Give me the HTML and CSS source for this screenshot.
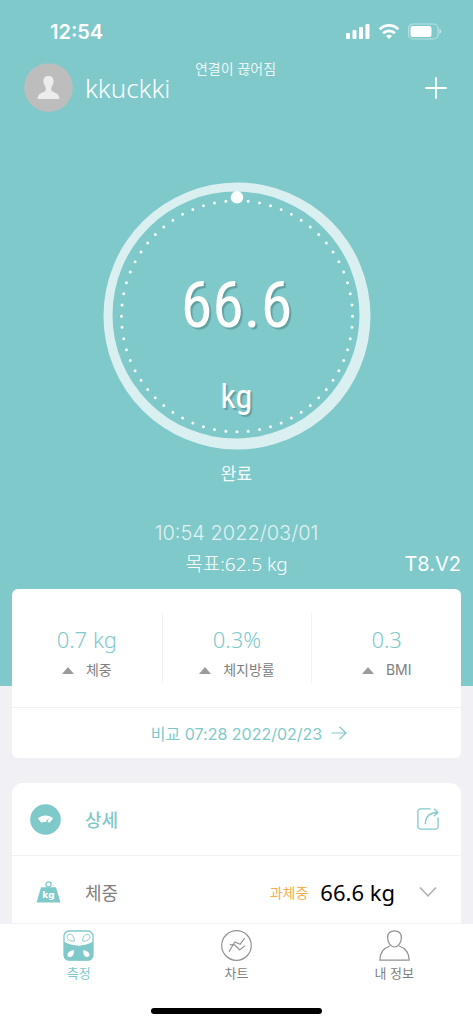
FILE: index.html
```html
<!DOCTYPE html>
<html lang="ko">
<head>
<meta charset="utf-8">
<meta name="viewport" content="width=device-width, initial-scale=1">
<title>측정</title>
<link rel="stylesheet" href="styles.css">
</head>
<body>
<div class="app">
  <main class="content">
    <section class="hero">
      <div class="status">
        <span class="clock">12:54</span>
        <svg class="status-icons" width="96" height="18" viewBox="0 0 96 18" aria-hidden="true">
          <g fill="#fff">
            <rect x="0" y="10" width="4" height="6" rx="1"/>
            <rect x="6.500" y="7" width="4" height="9" rx="1"/>
            <rect x="13" y="4" width="4" height="12" rx="1"/>
            <rect x="19.500" y="1" width="4" height="15" rx="1"/>
            <path d="M43 16 40 12.900a4.200 4.200 0 0 1 6 0z"/>
          </g>
          <g fill="none" stroke="#fff" stroke-width="2.800">
            <path d="M33.700 6.200a13.200 13.200 0 0 1 18.600 0"/>
            <path d="M37.100 10.200a8.400 8.400 0 0 1 11.800 0"/>
          </g>
          <rect x="62.600" y="1" width="29.500" height="15" rx="4.500" fill="none" stroke="#fff" stroke-opacity=".45" stroke-width="1.200"/>
          <rect x="64.500" y="3" width="21" height="11" rx="2.500" fill="#fff"/>
          <path d="M93.500 6.300c2.100.6 2.100 3.800 0 4.400z" fill="#fff" fill-opacity=".6"/>
        </svg>
      </div>
      <header class="header">
        <button class="profile" type="button">
          <svg width="49" height="49" viewBox="0 0 49 49" aria-hidden="true">
            <circle cx="24.500" cy="24.500" r="24.300" fill="#bdbdbd"/>
            <path d="M24.500 13c3.500 0 5.300 1.900 5 5.600-.2 2.700-1 4.300-2.200 5.700v2.400c0 1.300 1 1.900 3 2.700 3.200 1.300 5 2.400 5 6.600H13.700c0-4.200 1.800-5.300 5-6.600 2-.8 3-1.400 3-2.700v-2.400c-1.200-1.400-2-3-2.200-5.700-.3-3.700 1.500-5.600 5-5.600z" fill="#ececec"/>
          </svg>
          <span class="name">kkuckki</span>
        </button>
        <span class="connection">연결이 끊어짐</span>
        <button class="add" type="button" aria-label="추가">
          <svg width="22" height="22" viewBox="0 0 22 22" aria-hidden="true"><path d="M11 1v20M1 11h20" stroke="#fff" stroke-width="1.800" stroke-linecap="round"/></svg>
        </button>
      </header>
      <div class="dial">
        <svg class="ring" viewBox="0 0 268 268" aria-hidden="true">
          <path fill="#d9eff0" fill-rule="evenodd" d="M.5 134a133.500 133.500 0 1 0 267 0 133.500 133.500 0 1 0-267 0zM9.500 133a123.500 123.500 0 1 1 247 0 123.500 123.500 0 1 1-247 0z"/>
          <circle cx="134" cy="134.200" r="115.500" fill="none" stroke="#fff" stroke-opacity=".92" stroke-width="3" stroke-linecap="round" stroke-dasharray="0 1" pathLength="64"/>
          <circle cx="134" cy="15.300" r="6.200" fill="#fff"/>
        </svg>
        <div class="reading">
          <span class="reading-value">66.6</span>
          <span class="reading-unit">kg</span>
        </div>
      </div>
      <p class="state">완료</p>
      <p class="time">10:54 2022/03/01</p>
      <div class="target">
        <span class="goal">목표:62.5 kg</span>
        <span class="model">T8.V2</span>
      </div>
    </section>

    <section class="card summary">
      <div class="metrics">
        <div class="metric">
          <span class="metric-value">0.7 kg</span>
          <span class="metric-label"><i class="up"></i>체중</span>
        </div>
        <div class="metric">
          <span class="metric-value">0.3%</span>
          <span class="metric-label"><i class="up"></i>체지방률</span>
        </div>
        <div class="metric">
          <span class="metric-value">0.3</span>
          <span class="metric-label"><i class="up"></i>BMI</span>
        </div>
      </div>
      <a class="compare" href="#compare">비교 07:28 2022/02/23
        <svg width="16" height="14" viewBox="0 0 16 14" aria-hidden="true"><path d="M.5 7h14.500M8.500.8 15 7l-6.500 6.200" fill="none" stroke="#80c9cb" stroke-width="1.200"/></svg>
      </a>
    </section>

    <section class="card details">
      <div class="row">
        <span class="row-icon">
          <svg width="31" height="31" viewBox="0 0 31 31" aria-hidden="true">
            <circle cx="15.500" cy="15.500" r="15.300" fill="#80c9cb"/>
            <path d="M7.800 14.600c4.200-4.200 11.200-4.200 15.400 0l-3.700 4.200c-.6-.6-1.200-.9-2-1.100l1.600-4.400-3.600 4.900c-1.600-.5-2.900-.2-4 .6z" fill="#fff"/>
          </svg>
        </span>
        <h2 class="row-title accent">상세</h2>
        <button class="share" type="button" aria-label="공유">
          <svg width="22" height="22" viewBox="0 0 22 22" aria-hidden="true"><g fill="none" stroke="#80c9cb" stroke-width="1.300" stroke-linecap="round" stroke-linejoin="round"><path d="M13 .9H3.400A2.500 2.500 0 0 0 .9 3.400v15.200a2.500 2.500 0 0 0 2.500 2.500h15.200a2.500 2.500 0 0 0 2.500-2.500V10"/><path d="M8.300 15.800C8.500 9 12 4.500 20.800 4.500M17.300 1.200l3.700 3.300-3.700 3.300"/></g></svg>
        </button>
      </div>
      <div class="row">
        <span class="row-icon weight">
          <svg width="25" height="22" viewBox="0 0 25 22" aria-hidden="true">
            <circle cx="12.500" cy="3.400" r="2.600" fill="none" stroke="#80c9cb" stroke-width="1.300"/>
            <path d="M5 6.300h15l4.500 15.200H.5z" fill="#80c9cb"/>
            <text class="weight-text" x="12.500" y="17" text-anchor="middle">kg</text>
          </svg>
        </span>
        <span class="row-title">체중</span>
        <span class="grade">과체중</span>
        <span class="amount">66.6 kg</span>
        <button class="expand" type="button" aria-label="펼치기">
          <svg width="22" height="12" viewBox="0 0 22 12" aria-hidden="true"><path d="m3 1.500 8 8.300 8-8.300" fill="none" stroke="#b3b3b3" stroke-width="1.700"/></svg>
        </button>
      </div>
    </section>
  </main>

  <nav class="tabs">
    <a class="tab active" href="#measure">
      <svg width="31" height="31" viewBox="0 0 31 31" aria-hidden="true">
        <rect x="1" y="1" width="29" height="29" rx="5" fill="#fff" stroke="#80c9cb" stroke-width="1.300"/>
        <path d="M1 11.500C9 17 22 17 30 11.500V26a4.500 4.500 0 0 1-4.500 4.500h-20A4.500 4.500 0 0 1 1 26z" fill="#80c9cb"/>
        <g fill="none" stroke="#80c9cb" stroke-width="1"><path d="M4.200 6.300c.6-2.500 4-2.800 5.600-.4 1.200 1.800 1.700 3.700 1.300 5.200-2.800.7-7.700-1.500-6.900-4.800z"/><path d="M26.800 6.300c-.6-2.500-4-2.800-5.600-.4-1.200 1.800-1.700 3.700-1.300 5.200 2.800.7 7.700-1.500 6.900-4.800z"/></g>
        <path d="M11 20.200c.2 2.900-.8 5.400-2.800 6.600-2.600 1-4.400-1-3.600-3.100 1-2.100 3.600-3.400 6.400-3.500zM20 20.200c-.2 2.900.8 5.400 2.800 6.600 2.600 1 4.400-1 3.600-3.100-1-2.100-3.600-3.400-6.400-3.500z" fill="#fff"/>
      </svg>
      <span>측정</span>
    </a>
    <a class="tab" href="#chart">
      <svg width="31" height="31" viewBox="0 0 31 31" aria-hidden="true"><g fill="none" stroke="#929292" stroke-width="1.200"><circle cx="15.500" cy="15.500" r="14.800"/><path d="m8 21.800 5.800-9.900 5.400 2.300 4.500-6.200M8.700 14.900l4.500-.4 5.600 5.500 5.200-4.400"/></g></svg>
      <span>차트</span>
    </a>
    <a class="tab" href="#me">
      <svg width="31" height="31" viewBox="0 0 31 31" aria-hidden="true"><g fill="none" stroke="#929292" stroke-width="1.200" stroke-linejoin="round"><path d="M15.500.8c4.400 0 7.200 2.800 6.900 7.200-.3 5.300-3.300 9-6.900 9s-6.600-3.700-6.900-9C8.300 3.600 11.100.8 15.500.8z"/><path d="M11 16C4.800 17.900.9 22.800.8 30.200h29.400C30.100 22.800 26.200 17.900 20 16"/></g></svg>
      <span>내 정보</span>
    </a>
  </nav>
  <div class="home"><span class="home-bar"></span></div>
</div>
</body>
</html>
```
FILE: styles.css
```css
* { box-sizing: border-box; }
body {
  margin: 0;
  background: #f0f0f5;
  font-family: Inter, "Noto Sans CJK KR", sans-serif;
  color: #808080;
}
button {
  padding: 0;
  border: 0;
  background: none;
  font: inherit;
  color: inherit;
}
a { color: inherit; text-decoration: none; }
p, h2 { margin: 0; font-weight: 400; }
svg { display: block; }

.app { display: flex; flex-direction: column; height: 100vh; }
.content { flex: 1; min-height: 0; overflow: hidden; }

.hero {
  padding-bottom: 107px;
  background: #80c9cb;
  color: #fff;
  text-align: center;
}
.status {
  display: flex;
  justify-content: space-between;
  align-items: center;
  height: 63px;
  padding: 0 31px 0 50px;
}
.clock { font-size: 20px; font-weight: 600; }

.header {
  display: grid;
  grid-template-columns: 1fr auto 1fr;
  align-items: center;
  height: 49px;
  padding: 0 26px 0 24px;
}
.profile { display: flex; align-items: center; gap: 12px; color: #fff; }
.name { font: 300 26px/36px "Noto Sans", sans-serif; }
.connection {
  align-self: start;
  font-size: 14px;
  line-height: 12px;
  opacity: .85;
}
.add { justify-self: end; }

.dial {
  display: grid;
  width: 268px;
  margin: 70px auto 0;
}
.ring, .reading { grid-area: 1 / 1; }
.reading {
  display: flex;
  flex-direction: column;
  align-items: center;
  padding-top: 84px;
  font-family: "Roboto Condensed", "Liberation Sans Narrow", Roboto, sans-serif;
  text-shadow: 2px 2px 1px rgba(60, 110, 110, .45);
}
.reading-value { font-size: 64px; line-height: 80px; }
.reading-unit { margin-top: 28px; font-size: 34px; line-height: 44px; }

.state { margin-top: 12px; font-size: 17px; line-height: 24px; opacity: .9; }
.time { margin-top: 32px; font-size: 20px; font-weight: 300; line-height: 30px; opacity: .75; }
.target {
  display: grid;
  grid-template-columns: 1fr auto 1fr;
  align-items: center;
  height: 31px;
  padding: 0 12px;
}
.goal {
  grid-column: 2;
  font: 300 19px/30px "Noto Sans", "Noto Sans CJK KR", sans-serif;
}
.model { justify-self: end; font-size: 20px; }

.card { margin: 0 12px; background: #fff; }
.summary {
  position: relative;
  margin-top: -97px;
  border-radius: 6px;
}
.metrics {
  display: grid;
  grid-template-columns: repeat(3, 1fr);
  padding: 24px 0;
  border-bottom: 1px solid #f1f1f4;
}
.metric {
  display: flex;
  flex-direction: column;
  align-items: center;
  gap: 4px;
  height: 70px;
  padding-top: 10px;
}
.metric + .metric { border-left: 1px solid #f1f1f4; }
.metric-value { font: 300 22px/32px "Noto Sans", sans-serif; color: #80c9cb; }
.metric-label {
  display: flex;
  align-items: center;
  gap: 12px;
  font-size: 14px;
  line-height: 22px;
}
.up {
  border: 6px solid transparent;
  border-top: 0;
  border-bottom: 7px solid #9b9b9b;
}
.compare {
  display: flex;
  justify-content: center;
  align-items: center;
  gap: 9px;
  height: 50px;
  padding-left: 25px;
  font-size: 16px;
  color: #80c9cb;
}

.details { margin-top: 25px; border-radius: 11px 11px 0 0; }
.row {
  display: flex;
  align-items: center;
  height: 72px;
  padding: 0 22px 0 18px;
}
.row + .row { height: 73px; border-top: 1px solid #f1f1f4; }
.row-icon { display: flex; justify-content: center; width: 37px; margin-right: 18px; }
.row-icon:not(.weight) { justify-content: flex-start; }
.weight-text { font: 700 9px "DejaVu Sans", sans-serif; fill: #fff; }
.row-title { flex: 1; font-size: 18px; }
.accent { color: #80c9cb; font-weight: 500; }
.grade { font-size: 14px; color: #f4b04e; }
.amount { margin: 0 22px 0 12px; font: 400 22px/34px "Noto Sans", sans-serif; color: #000; }

.tabs {
  display: grid;
  grid-template-columns: repeat(3, 1fr);
  padding-top: 6px;
  border-top: 1px solid #f3f3f5;
  background: #fff;
}
.tab {
  display: flex;
  flex-direction: column;
  align-items: center;
  gap: 2px;
  font-size: 13px;
  line-height: 20px;
}
.active { color: #80c9cb; }
.home { display: flex; justify-content: center; padding: 25px 0 10px; background: #fff; }
.home-bar { width: 36%; height: 6px; border-radius: 3px; background: #000; }
```
